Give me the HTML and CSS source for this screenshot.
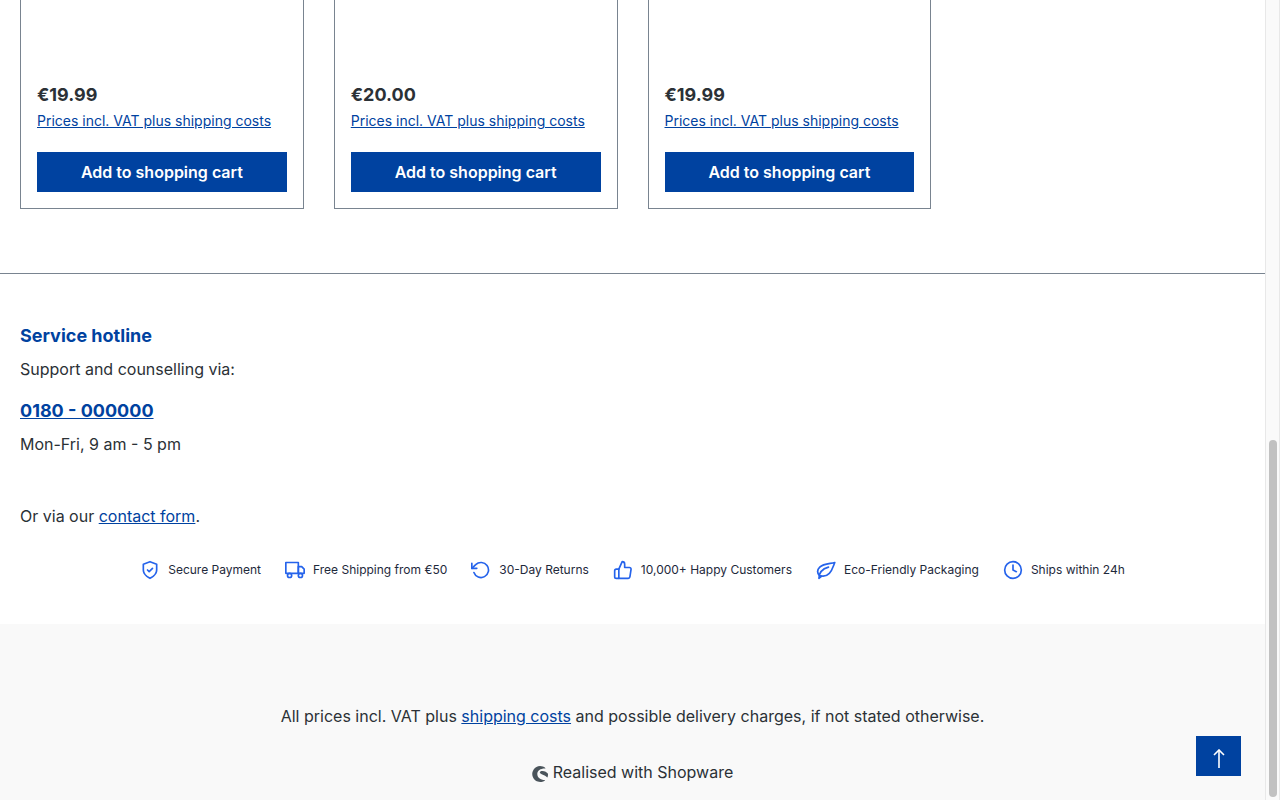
FILE: index.html
```
<!DOCTYPE html>
<html lang="en">

<head>
<meta charset="utf-8">
<meta name="viewport" content="width=device-width, initial-scale=1">
<title>Shop</title>
<link rel="stylesheet" href="styles.css">
</head>

<body>
<div class="page">
  <main class="listing">
    <div class="product-box">
      <p class="product-price">€19.99</p>
      <a class="product-tax" href="#">Prices incl. VAT plus shipping costs</a>
      <button class="btn-buy" type="button">Add to shopping cart</button>
    </div>
    <div class="product-box">
      <p class="product-price">€20.00</p>
      <a class="product-tax" href="#">Prices incl. VAT plus shipping costs</a>
      <button class="btn-buy" type="button">Add to shopping cart</button>
    </div>
    <div class="product-box">
      <p class="product-price">€19.99</p>
      <a class="product-tax" href="#">Prices incl. VAT plus shipping costs</a>
      <button class="btn-buy" type="button">Add to shopping cart</button>
    </div>
  </main>

  <footer class="footer">
    <section class="hotline">
      <h2 class="hotline-title">Service hotline</h2>
      <p>Support and counselling via:</p>
      <a class="hotline-phone" href="tel:0180000000">0180 - 000000</a>
      <p>Mon-Fri, 9 am - 5 pm</p>
      <p class="hotline-contact">Or via our <a href="#">contact form</a>.</p>
    </section>

    <ul class="badges">
      <li>
        <svg viewBox="0 0 24 24"><path d="M12 22s8-4 8-10V5l-8-3-8 3v7c0 6 8 10 8 10z"/><path d="m9 12 2 2 4-4"/></svg>
        Secure Payment
      </li>
      <li>
        <svg viewBox="0 0 24 24"><path d="M1 3h15v13H1z"/><path d="M16 8h4l3 3v5h-7z"/><circle cx="5.500" cy="18.500" r="2.500"/><circle cx="18.500" cy="18.500" r="2.500"/></svg>
        Free Shipping from €50
      </li>
      <li>
        <svg viewBox="0 0 24 24"><path d="M1 4v6h6"/><path d="M3.510 15a9 9 0 1 0 2.130-9.360L1 10"/></svg>
        30-Day Returns
      </li>
      <li>
        <svg viewBox="0 0 24 24"><path d="M14 9V5a3 3 0 0 0-3-3l-4 9v11h11.280a2 2 0 0 0 2-1.700l1.380-9a2 2 0 0 0-2-2.300z"/><path d="M7 22H4a2 2 0 0 1-2-2v-7a2 2 0 0 1 2-2h3"/></svg>
        10,000+ Happy Customers
      </li>
      <li>
        <svg viewBox="0 0 24 24"><path d="M22.500 3C17 4.500 9 4 4.500 8.500 1.500 11.500 1.500 15.500 4 18.500c4 1.500 9 .5 12-2.500C19.500 12.500 20.500 8 22.500 3z"/><path d="M3.500 22C3.500 15.500 8 10.500 15 8.500M3.500 22l3-2.500"/></svg>
        Eco-Friendly Packaging
      </li>
      <li>
        <svg viewBox="0 0 24 24"><circle cx="12" cy="12" r="10"/><path d="M12 6v6l4 2"/></svg>
        Ships within 24h
      </li>
    </ul>

    <div class="footer-bottom">
      <p>All prices incl. VAT plus <a href="#">shipping costs</a> and possible delivery charges, if not stated otherwise.</p>
      <p class="realised">
        <svg viewBox="0 0 16 16"><path d="M13.300 1.900C11.900.7 10 0 8 0a8 8 0 1 0 4.900 14.500c.2-.2.100-.4-.1-.4C8.500 13.800 5.300 11.800 5.300 8 5.300 4.500 8.500 2.400 13.100 2.500c.4 0 .5-.3.200-.6z"/><path d="M16 7.700C14.900 6.200 12.800 5 10.400 5 8.700 5 7.800 5.600 7.800 6.500c0 1.800 4.300 1.900 7.200 4.800.2.200.4.100.5-.1.400-1.100.6-2.300.5-3.500z"/></svg>
        Realised with Shopware
      </p>
    </div>
  </footer>
</div>

<div class="scrollbar"><div class="scrollbar-thumb"></div></div>

<button class="scroll-up" type="button" aria-label="Back to top">
  <svg viewBox="0 0 12 20"><path d="M6 19V1"/><path d="M1 6l5-5 5 5"/></svg>
</button>
</body>

</html>
```

FILE: styles.css
```
* {
  box-sizing: border-box;
}

body {
  display: flex;
  height: 100vh;
  margin: 0;
  overflow: hidden;
  background: #fff;
  color: #2b3136;
  font: 16px/24px Inter, sans-serif;
}

p, h2, ul {
  margin: 0;
}

a {
  color: #0042a0;
}

.page {
  display: flex;
  flex: 1;
  flex-direction: column;
}

/* product listing */
.listing {
  display: grid;
  grid-template-columns: repeat(4, 1fr);
  gap: 30px;
  padding: 0 20px 64px;
}

.product-box {
  padding: 81px 16px 16px;
  border: 1px solid #798490;
  border-top: 0;
}

.product-price {
  font-size: 18px;
  font-weight: 700;
  line-height: 28px;
}

.product-tax {
  display: block;
  margin-bottom: 19px;
  font-size: 14px;
}

.btn-buy {
  width: 100%;
  height: 40px;
  border: 0;
  background: #0042a0;
  color: #fff;
  font: 600 16px/24px Inter, sans-serif;
}

/* footer */
.footer {
  display: flex;
  flex: 1;
  flex-direction: column;
  border-top: 1px solid #798490;
}

.hotline {
  padding: 48px 20px 32px;
}

.hotline-title,
.hotline-phone {
  font-size: 18px;
  font-weight: 700;
  line-height: 28px;
  color: #0042a0;
}

.hotline-title {
  margin-bottom: 7px;
}

.hotline-phone {
  display: block;
  margin: 16px 0 7px;
}

.hotline-contact {
  margin-top: 48px;
}

.badges {
  display: flex;
  justify-content: center;
  gap: 24px;
  padding: 0 20px 44px;
  list-style: none;
}

.badges li {
  display: flex;
  align-items: center;
  gap: 8px;
  color: #1e293b;
  font-size: 12px;
  line-height: 20px;
}

.badges svg {
  width: 20px;
  height: 20px;
  fill: none;
  stroke: #2563eb;
  stroke-width: 2;
  stroke-linecap: round;
  stroke-linejoin: round;
}

.footer-bottom {
  flex: 1;
  padding: 80px 20px 16px;
  background: #f9f9f9;
  text-align: center;
}

.realised {
  display: flex;
  justify-content: center;
  align-items: center;
  gap: 5px;
  margin-top: 32px;
}

.realised svg {
  width: 16px;
  height: 16px;
  margin-top: 4px;
  fill: #4a545b;
}

/* scrollbar */
.scrollbar {
  display: flex;
  flex-direction: column;
  justify-content: flex-end;
  width: 15px;
  padding: 3px 2px 3px 3px;
  border-left: 1px solid #e8e8e8;
  border-right: 1px solid #e8e8e8;
  background: #fafafa;
}

.scrollbar-thumb {
  width: 8px;
  height: 45%;
  border-radius: 4px;
  background: #c1c1c1;
}

.scroll-up {
  position: fixed;
  right: 39px;
  bottom: 24px;
  display: flex;
  align-items: center;
  justify-content: center;
  width: 45px;
  height: 40px;
  padding: 5px 0 0;
  border: 0;
  background: #0042a0;
}

.scroll-up svg {
  width: 12px;
  height: 20px;
  fill: none;
  stroke: #fff;
  stroke-width: 1.6;
}
```
